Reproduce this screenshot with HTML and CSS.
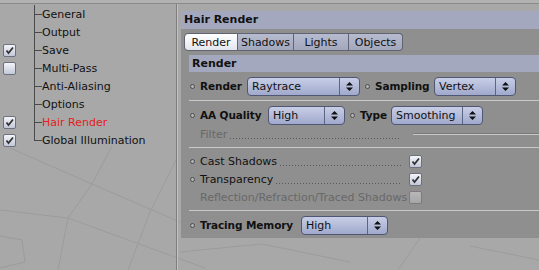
FILE: index.html
```html
<!DOCTYPE html>
<html lang="en">
<head>
    <meta charset="UTF-8">
    <meta name="viewport" content="width=device-width, initial-scale=1.0">
    <title>Render Settings - Hair Render</title>
    <link rel="stylesheet" href="styles.css">
</head>
<body>
    <div class="topbar"></div>
    <div class="app">
        <aside class="sidebar">
            <ul class="tree">
                <li class="item"><span class="check none"></span><span class="twig"></span><span class="name">General</span></li>
                <li class="item"><span class="check none"></span><span class="twig"></span><span class="name">Output</span></li>
                <li class="item"><span class="check on"></span><span class="twig"></span><span class="name">Save</span></li>
                <li class="item"><span class="check"></span><span class="twig"></span><span class="name">Multi-Pass</span></li>
                <li class="item"><span class="check none"></span><span class="twig"></span><span class="name">Anti-Aliasing</span></li>
                <li class="item"><span class="check none"></span><span class="twig"></span><span class="name">Options</span></li>
                <li class="item active"><span class="check on"></span><span class="twig"></span><span class="name">Hair Render</span></li>
                <li class="item last"><span class="check on"></span><span class="twig"></span><span class="name">Global Illumination</span></li>
            </ul>
        </aside>

        <main class="main">
            <section class="panel">
                <h2 class="panel-title">Hair Render</h2>

                <div class="tabs">
                    <span class="tab current">Render</span>
                    <span class="tab">Shadows</span>
                    <span class="tab">Lights</span>
                    <span class="tab">Objects</span>
                </div>

                <div class="group">
                    <h3 class="group-title">Render</h3>

                    <div class="row">
                        <div class="field">
                            <span class="dot"></span><span class="label bold l-render">Render</span>
                            <div class="select w-raytrace"><span class="value">Raytrace</span><span class="arrows"><svg width="7" height="9" viewBox="0 0 7 9"><path d="M3.5 0 L7 3.5 H0 Z M0 5.5 H7 L3.5 9 Z" fill="#111"/></svg></span></div>
                        </div>
                        <div class="field">
                            <span class="dot"></span><span class="label bold l-sampling">Sampling</span>
                            <div class="select w-vertex"><span class="value">Vertex</span><span class="arrows"><svg width="7" height="9" viewBox="0 0 7 9"><path d="M3.5 0 L7 3.5 H0 Z M0 5.5 H7 L3.5 9 Z" fill="#111"/></svg></span></div>
                        </div>
                    </div>

                    <div class="sep"></div>

                    <div class="row">
                        <div class="field">
                            <span class="dot"></span><span class="label bold l-aa">AA Quality</span>
                            <div class="select w-high"><span class="value">High</span><span class="arrows"><svg width="7" height="9" viewBox="0 0 7 9"><path d="M3.5 0 L7 3.5 H0 Z M0 5.5 H7 L3.5 9 Z" fill="#111"/></svg></span></div>
                        </div>
                        <div class="field">
                            <span class="dot"></span><span class="label bold l-type">Type</span>
                            <div class="select w-smooth"><span class="value">Smoothing</span><span class="arrows"><svg width="7" height="9" viewBox="0 0 7 9"><path d="M3.5 0 L7 3.5 H0 Z M0 5.5 H7 L3.5 9 Z" fill="#111"/></svg></span></div>
                        </div>
                    </div>

                    <div class="line-row">
                        <div class="lead-cell"><span class="label off">Filter</span><span class="leader"></span></div>
                        <div class="edit"></div>
                    </div>

                    <div class="sep"></div>

                    <div class="line-row">
                        <div class="lead-cell"><span class="dot"></span><span class="label">Cast Shadows</span><span class="leader"></span></div>
                        <span class="box on"></span>
                    </div>
                    <div class="line-row">
                        <div class="lead-cell"><span class="dot"></span><span class="label">Transparency</span><span class="leader"></span></div>
                        <span class="box on"></span>
                    </div>
                    <div class="line-row">
                        <div class="lead-cell"><span class="label off">Reflection/Refraction/Traced Shadows</span></div>
                        <span class="box disabled"></span>
                    </div>

                    <div class="sep"></div>

                    <div class="row last-row">
                        <div class="field">
                            <span class="dot"></span><span class="label bold l-memory">Tracing Memory</span>
                            <div class="select w-memory"><span class="value">High</span><span class="arrows"><svg width="7" height="9" viewBox="0 0 7 9"><path d="M3.5 0 L7 3.5 H0 Z M0 5.5 H7 L3.5 9 Z" fill="#111"/></svg></span></div>
                        </div>
                    </div>
                </div>
            </section>
        </main>
    </div>
</body>
</html>
```

FILE: styles.css
```css
html, body {
    margin: 0;
    height: 100%;
}
body {
    font-family: "DejaVu Sans", Verdana, sans-serif;
    font-size: 11px;
    color: #111;
    overflow: hidden;
    background-color: #a8a8a8;
    background-image: url("data:image/svg+xml,%3Csvg xmlns='http://www.w3.org/2000/svg' width='539' height='270'%3E%3Cg fill='none' stroke='%239c9c9c' stroke-width='1'%3E%3Cpath d='M10 148 L92 184 L180 222'/%3E%3Cpath d='M112 146 L92 184 L68 218 L58 270'/%3E%3Cpath d='M0 210 L68 218 L205 268'/%3E%3Cpath d='M176 160 L150 212 L128 270'/%3E%3Cpath d='M0 236 L22 240 L25 262 L0 268'/%3E%3Cpath d='M180 252 L262 244 L350 262'/%3E%3Cpath d='M420 238 L398 270'/%3E%3Cpath d='M470 246 L539 260'/%3E%3C/g%3E%3C/svg%3E");
    background-repeat: no-repeat;
}

.topbar {
    height: 3px;
    background: #b2b2b2;
    border-bottom: 1px solid #8a8a8a;
}
.app {
    display: flex;
    height: 266px;
}

/* left tree */
.sidebar {
    width: 176px;
    border-right: 1px solid #7e7e7e;
    box-shadow: 1px 0 0 #c2c2c2;
    padding-top: 1px;
}
.tree {
    list-style: none;
    margin: 0;
    padding: 0;
}
.item {
    display: flex;
    align-items: center;
    height: 18px;
    padding-left: 3px;
}
.item .check {
    margin-right: 18px;
}
.twig {
    width: 8px;
    height: 18px;
    background:
        linear-gradient(#4a4a4a, #4a4a4a) 0 0 / 1px 100% no-repeat,
        linear-gradient(#4a4a4a, #4a4a4a) 0 9px / 8px 1px no-repeat;
}
.item.last .twig {
    background:
        linear-gradient(#4a4a4a, #4a4a4a) 0 0 / 1px 10px no-repeat,
        linear-gradient(#4a4a4a, #4a4a4a) 0 9px / 8px 1px no-repeat;
}
.name {
    white-space: nowrap;
}
.item.active .name {
    color: #e4201c;
}

/* checkboxes */
.check, .box {
    display: inline-block;
    width: 11px;
    height: 11px;
    border: 1px solid #6d717e;
    border-radius: 2px;
    background: linear-gradient(#f4f5fa, #c3c8d8);
    flex: none;
}
.check.none {
    visibility: hidden;
}
.check.on, .box.on {
    background:
        url("data:image/svg+xml,%3Csvg xmlns='http://www.w3.org/2000/svg' width='11' height='11'%3E%3Cpath d='M2.5 5.5 L4.5 8 L9 2.5' fill='none' stroke='%23333' stroke-width='1.8'/%3E%3C/svg%3E") center / 11px 11px no-repeat,
        linear-gradient(#f4f5fa, #c3c8d8);
}
.box.disabled {
    border-color: #7c7c7c;
    background: linear-gradient(#b8b8b8, #a6a6a6);
}

/* right panel */
.main {
    flex: 1;
    padding: 7px 0 0 4px;
}
.panel {
    background: #8f8f8f;
    padding-bottom: 3px;
}
.panel-title {
    margin: 0;
    height: 18px;
    line-height: 18px;
    padding-left: 3px;
    font-size: 11px;
    font-weight: bold;
    background: #a3a8be;
}
.tabs {
    display: flex;
    margin: 4px 0 0 3px;
    height: 18px;
}
.tab {
    display: flex;
    align-items: center;
    justify-content: center;
    width: 54px;
    border: 1px solid #5f6372;
    border-left: none;
    background: linear-gradient(#b6bbce, #a2a7bd);
    box-sizing: border-box;
}
.tab:first-child {
    border-left: 1px solid #5f6372;
    border-radius: 4px 0 0 4px;
}
.tab:last-child {
    border-radius: 0 4px 4px 0;
}
.tab:nth-child(2) { width: 56px; }
.tab:nth-child(3) { width: 55px; }
.tab.current {
    background: linear-gradient(#ffffff, #e4e6ee);
}

.group {
    margin: 4px 0 0 8px;
}
.group-title {
    margin: 0;
    height: 17px;
    line-height: 17px;
    padding-left: 3px;
    font-size: 11px;
    font-weight: bold;
    background: #a3a8be;
}

.row {
    display: flex;
    gap: 4px;
    margin-top: 4px;
    height: 20px;
    align-items: center;
}
.field {
    display: flex;
    align-items: center;
}
.dot {
    display: inline-block;
    width: 3px;
    height: 3px;
    border: 1px solid #4c4c4c;
    border-radius: 50%;
    background: #b4b4b4;
    margin: 0 5px 0 1px;
    flex: none;
}
.label {
    white-space: nowrap;
}
.label.bold {
    font-weight: bold;
    font-size: 10.5px;
    letter-spacing: -0.1px;
}
.l-render { width: 47px; }
.l-sampling { width: 59px; }
.l-aa { width: 68px; }
.l-type { width: 31px; }
.l-memory { width: 101px; }
.label.off {
    color: #686868;
    margin-left: 11px;
}

.select {
    display: flex;
    height: 19px;
    box-sizing: border-box;
    border: 1px solid #4f5774;
    border-radius: 4px;
    background: linear-gradient(#c8cee6, #a0a9cc);
}
.select .value {
    flex: 1;
    padding-left: 4px;
    line-height: 17px;
}
.arrows {
    width: 19px;
    display: flex;
    align-items: center;
    justify-content: center;
    border-left: 1px solid #5d6585;
}
.w-raytrace { width: 113px; }
.w-vertex { width: 82px; }
.w-high { width: 77px; }
.w-smooth { width: 92px; }
.w-memory { width: 87px; }

.sep {
    height: 1px;
    background: #c9c9c9;
    margin-top: 4px;
}

.line-row {
    display: flex;
    align-items: center;
    height: 18px;
}
.lead-cell {
    display: flex;
    align-items: center;
    width: 220px;
    flex: none;
}
.leader {
    flex: 1;
    height: 9px;
    margin: 0 8px 0 3px;
    background: linear-gradient(to right, #5a5a5a 1px, transparent 1px) 0 100% / 3px 1px repeat-x;
}
.edit {
    flex: 1;
    height: 1px;
    margin: 0 0 0 4px;
    border-top: 1px solid #7a7a7a;
    background: #c8c8c8;
}
.sep + .line-row {
    margin-top: 4px;
}
.last-row {
    margin-top: 4px;
}
```
